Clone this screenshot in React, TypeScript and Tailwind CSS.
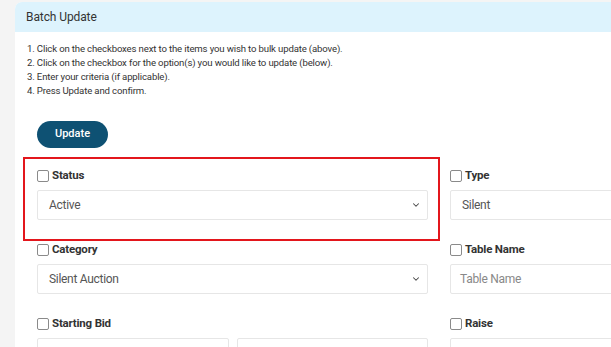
import { ChevronDown } from "lucide-react";

const steps = [
  "1. Click on the checkboxes next to the items you wish to bulk update (above).",
  "2. Click on the checkbox for the option(s) you would like to update (below).",
  "3. Enter your criteria (if applicable).",
  "4. Press Update and confirm.",
];

const Label = ({ text }: { text: string }) => (
  <div className="flex h-[12px] items-center gap-[3px]">
    <span className="block h-[12px] w-[12px] rounded-[2px] border border-[#8a8a8a] bg-white" />
    <span className="text-[11.5px] font-bold leading-none tracking-[-0.2px] text-[#333]">{text}</span>
  </div>
);

const Select = ({ value }: { value: string }) => (
  <div className="mt-[8px] flex h-[30px] items-center justify-between rounded-[2px] border border-[#e6e6e6] bg-white pl-[11px] pr-[6px]">
    <span className="text-[12px] tracking-[-0.3px] text-[#555]">{value}</span>
    <ChevronDown size={10} strokeWidth={2.5} className="text-[#444]" />
  </div>
);

const Input = ({ placeholder }: { placeholder?: string }) => (
  <div className="mt-[8px] flex h-[30px] items-center rounded-[2px] border border-[#e6e6e6] bg-white pl-[9px]">
    <span className="text-[12px] tracking-[-0.3px] text-[#888]">{placeholder}</span>
  </div>
);

export default function App() {
  return (
    <div className="h-[347px] w-[611px] overflow-hidden bg-[#f4f4f4] font-['Roboto',sans-serif]">
      <div className="ml-[15px] mt-[2px] w-[900px] rounded-tl-[7px] bg-white">
        <div className="flex h-[30px] items-center rounded-tl-[7px] bg-[#ddf3fd] pl-[11px]">
          <span className="text-[12px] tracking-[-0.1px] text-[#333]">Batch Update</span>
        </div>
        <div className="pl-[12px] pt-[10px]">
          {steps.map((s) => (
            <p key={s} className="text-[9.6px] leading-[14px] tracking-[-0.15px] text-[#333]">
              {s}
            </p>
          ))}
        </div>
        <div className="pl-[22px] pt-[22px]">
          <button className="h-[27px] w-[71px] rounded-full bg-[#0e5173] text-[11px] font-medium text-white">
            Update
          </button>
        </div>
        <div className="grid grid-cols-[391px_391px] gap-x-[22px] gap-y-[24px] pl-[22px] pt-[22px]">
          <div className="relative">
            <div className="absolute -bottom-[21px] -left-[14px] -right-[12px] -top-[13px] border-2 border-[#e3161c]" />
            <Label text="Status" />
            <Select value="Active" />
          </div>
          <div>
            <Label text="Type" />
            <Select value="Silent" />
          </div>
          <div>
            <Label text="Category" />
            <Select value="Silent Auction" />
          </div>
          <div>
            <Label text="Table Name" />
            <Input placeholder="Table Name" />
          </div>
          <div>
            <Label text="Starting Bid" />
            <div className="grid grid-cols-2 gap-x-[8px]">
              <Input />
              <Input />
            </div>
          </div>
          <div>
            <Label text="Raise" />
            <Input />
          </div>
        </div>
      </div>
    </div>
  );
}
